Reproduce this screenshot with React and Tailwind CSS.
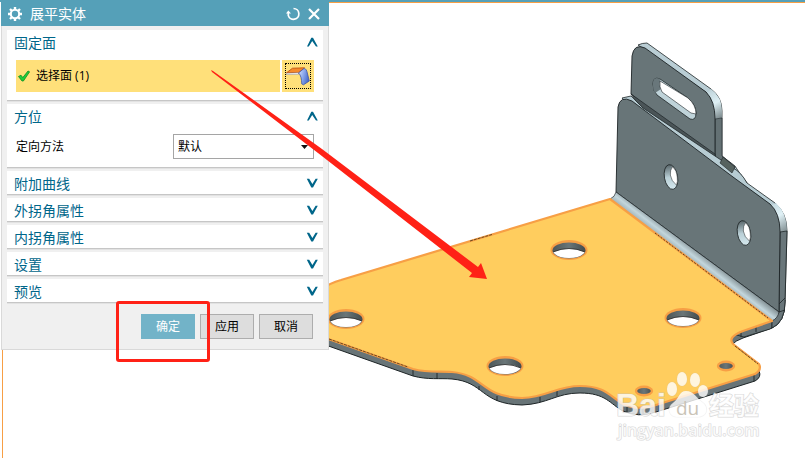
import React from 'react';

const Chevron = ({ open }) => (
    <svg className="w-3 h-3 shrink-0" viewBox="0 0 12 12" fill="#00668a" aria-hidden="true">
        {open ? (
            <path d="M1 9.500 L5.300 0.800 H7 L11.800 9.500 H10 L6.200 4 L2.800 9.500 Z" />
        ) : (
            <path d="M0.800 0.800 L5.300 9.500 H7 L11.800 0.800 H9.600 L6.400 6 L3.200 0.800 Z" />
        )}
    </svg>
);

const Section = ({ title, open = false, children }) => (
    <section className="bg-white border-b border-[#c6c6c6] shadow-[0_1px_0_#e2e2e2]">
        <h2>
            <button
                type="button"
                aria-expanded={open}
                className="flex w-full h-[23px] items-center justify-between pl-[7px] pr-[5px] pt-[2px] text-sm leading-5 text-[#00668a]"
            >
                <span>{title}</span>
                <Chevron open={open} />
            </button>
        </h2>
        {children}
    </section>
);

const GearIcon = () => (
    <svg className="w-[14px] h-[14px]" viewBox="0 0 14 14" aria-hidden="true">
        <g stroke="#fff" strokeWidth="2.4">
            <path d="M7 0 V2.500 M7 11.500 V14 M0 7 H2.500 M11.500 7 H14" />
            <path d="M2 2 L4 4 M10 10 L12 12 M12 2 L10 4 M4 10 L2 12" />
        </g>
        <circle cx="7" cy="7" r="4.2" fill="none" stroke="#fff" strokeWidth="2.1" />
    </svg>
);

const ResetIcon = () => (
    <svg className="w-[14px] h-[14px]" viewBox="0 0 14 14" fill="none" aria-hidden="true">
        <path d="M7.500 1.500 A5.400 5.400 0 1 1 2.300 8.500 V5" stroke="#fff" strokeWidth="1.7" />
        <path d="M0 6.600 L2.300 3.600 L5 6.600 Z" fill="#fff" />
    </svg>
);

const CloseIcon = () => (
    <svg className="w-3 h-3" viewBox="0 0 12 12" aria-hidden="true">
        <path d="M1 1 L11 11 M11 1 L1 11" stroke="#fff" strokeWidth="2.2" />
    </svg>
);

const CheckIcon = () => (
    <svg className="w-3 h-3" viewBox="0 0 12 12" aria-hidden="true">
        <path d="M0.5 6.5 L3 5.2 L4.8 7.6 L10 1 L11.6 1.8 L5.4 11 L4 11 Z" fill="#1fce3a" stroke="#0d8f22" strokeWidth="0.8" strokeLinejoin="round" />
    </svg>
);

const FaceIcon = () => (
    <svg className="w-6 h-6 shrink-0" viewBox="0 0 24 24" aria-hidden="true">
        <defs>
            <linearGradient id="bend" x1="0" x2="1" y1="0" y2="0.4">
                <stop offset="0" stopColor="#d8e4ff" />
                <stop offset="0.5" stopColor="#8fabee" />
                <stop offset="1" stopColor="#4a6ccc" />
            </linearGradient>
        </defs>
        <path d="M0.500 8.800 L6.500 4.200 L18.500 3.800 L13 8.400 Z" fill="#f58a2c" stroke="#b8480c" strokeWidth="0.8" />
        <path d="M0.500 9.300 L12.500 8.800 V10.400 L0.500 10.600 Z" fill="#fff" stroke="#8c8c9c" strokeWidth="0.5" />
        <path d="M12.500 9 L18 4.500 C20 4.600 20.800 6.500 21.300 9 L23.300 17 L17.500 20.800 L15.800 20 C15.500 15 15 11 12.500 9 Z" fill="url(#bend)" stroke="#3f55a8" strokeWidth="0.8" />
    </svg>
);

const PLATE = 'M320 290 Q330 283 341 280 L610 199 L772 321 L743 331 Q727 337 733 344 L759 364 Q762 370 755 374 L656 405 Q638 411 623 404 C610 397 606 386 580 386 C556 386 548 397 522 398 C480 397 485 375 452 372 C440 371 428 373 413 369 L320 336 Z';

// hole through the yellow plate, far wall visible under the upper rim
const PlateHole = ({ x, y }) => (
    <g>
        <ellipse cx={x} cy={y} rx="18.5" ry="10" fill="#f79f45" />
        <ellipse cx={x} cy={y + 0.5} rx="16.5" ry="8" fill="url(#wall)" />
        <path d={`M${x - 16} ${y + 2} Q${x} ${y - 5} ${x + 16} ${y + 2} Q${x + 12} ${y + 8} ${x} ${y + 8} Q${x - 12} ${y + 8} ${x - 16} ${y + 2} Z`} fill="#fff" />
        <path d={`M${x - 16} ${y + 2} Q${x} ${y - 5} ${x + 16} ${y + 2}`} fill="none" stroke="#222" strokeWidth="0.8" />
    </g>
);

const FlangeHole = ({ x, y }) => (
    <g transform={`translate(${x} ${y}) rotate(-10)`}>
        <ellipse rx="6.6" ry="12.5" fill="url(#rim)" stroke="#1d2426" strokeWidth="0.8" />
        <path d="M3.5 -10 Q7 -5 6.2 1 Q6 6 4 9 Q-0.5 4 -0.3 -2 Q0 -7 3.5 -10 Z" fill="#fff" stroke="#1d2426" strokeWidth="0.5" />
    </g>
);

const PartModel = () => (
    <svg className="absolute inset-0 w-full h-full" viewBox="0 0 805 458" preserveAspectRatio="xMinYMin meet" role="img">
        <defs>
            <linearGradient id="wall" x1="0" x2="1" y1="0" y2="0">
                <stop offset="0" stopColor="#4c5658" />
                <stop offset="0.5" stopColor="#6a7678" />
                <stop offset="1" stopColor="#434c4e" />
            </linearGradient>
            <linearGradient id="rim" x1="0" x2="0" y1="0" y2="1">
                <stop offset="0" stopColor="#59666a" />
                <stop offset="0.5" stopColor="#b9cfd6" />
                <stop offset="1" stopColor="#d5e8ee" />
            </linearGradient>
            <linearGradient id="fold" gradientUnits="userSpaceOnUse" x1="692" y1="262" x2="702" y2="249">
                <stop offset="0" stopColor="#9fb2b8" />
                <stop offset="0.35" stopColor="#c3d6dc" />
                <stop offset="1" stopColor="#667174" />
            </linearGradient>
            <linearGradient id="corner" gradientUnits="userSpaceOnUse" x1="765" y1="200" x2="787" y2="235">
                <stop offset="0" stopColor="#b4cbd2" />
                <stop offset="0.5" stopColor="#e0f1f6" />
                <stop offset="1" stopColor="#6d7a7d" />
            </linearGradient>
            <linearGradient id="tabcorner" gradientUnits="userSpaceOnUse" x1="705" y1="88" x2="722" y2="120">
                <stop offset="0" stopColor="#b7ccd3" />
                <stop offset="0.5" stopColor="#def0f5" />
                <stop offset="1" stopColor="#6d7a7d" />
            </linearGradient>
        </defs>

        {/* sheet thickness below the yellow face */}
        <path d={PLATE} transform="translate(0 7)" fill="#687477" stroke="#1d2426" strokeWidth="1" />
        <path d="M733 334 L772 319 L780 308 L785 300 Q786 323 770 329 L744 337 Z" fill="#687477" stroke="#1d2426" strokeWidth="0.8" />
        <path d="M413 370 V376 M437 373 V379 M479 386 V390 M497 396 V401 M540 397 V402 M557 391 V396 M627 407 V412 M643 409 V414 M659 405 V411 M754 375 V381 M741 332 V337 M756 327 V332" stroke="#1d2426" strokeWidth="0.9" />

        {/* upper tab */}
        <path d="M638 45 Q642 43 647 43 L711 89 Q722 97 722 111 V156 L735 166 Q738 171 747 183 L715 161 L707 93 Z" fill="#b9cdd4" stroke="#1d2426" strokeWidth="0.8" />
        <path d="M707 93 L711 89 Q722 97 722 111 V118 L715 119 Q716 101 707 93 Z" fill="url(#tabcorner)" />
        <path d="M715 119 L722 118 V156 L735 167 L731 174 L715 161 Z" fill="#647174" stroke="#1d2426" strokeWidth="0.6" />
        <path d="M631 94 L632 56 Q634 43 645 48 L706 92 Q715 101 715 119 V160 Z" fill="#687578" stroke="#1d2426" strokeWidth="0.9" />
        <path d="M631 94 L715 154 V162 L640 107 Z" fill="#4a5457" stroke="#1d2426" strokeWidth="0.7" />
        <path d="M653 84 Q653 76 660 79 L688 98 Q696 105 696 113 Q696 121 690 119 L657 95 Q653 91 653 84 Z" fill="#bfd3d9" stroke="#1d2426" strokeWidth="0.8" />
        <path d="M653 84 Q653 76 660 79 L661 89 L655 93 Q653 90 653 84 Z" fill="#69777b" />
        <path d="M660 81 L688 98 Q696 105 696 114 L691 113 L662 92 Q659 87 660 81 Z" fill="#fff" stroke="#1d2426" strokeWidth="0.6" />

        {/* rear flange */}
        <path d="M622 98 L631 96 L643 108 L733 168 Q741 172 747 183 L775 203 Q787 213 787 231 L785 302 Q785 322 772 328 L772 321 L779 312 L772 206 L628 105 Z" fill="#b7ccd3" stroke="#1d2426" strokeWidth="0.8" />
        <path d="M770 206 L776 203 Q787 213 787 231 L780 232 Q780 213 770 206 Z" fill="url(#corner)" />
        <path d="M780 232 L787 231 L785 302 Q785 322 772 328 V321 L779 312 Z" fill="#69767a" stroke="#1d2426" strokeWidth="0.8" />
        <path d="M779 304 L785 298 M779 312 L785 310" stroke="#1d2426" strokeWidth="0.8" />
        <path d="M723 157 L735 167 L732 173 L720 163 Z" fill="#56625f" stroke="#1d2426" strokeWidth="0.6" />
        <path d="M616 192 L618 107 Q620 95 632 101 L733 177 L770 204 Q780 213 780 232 L779 312 Z" fill="#687578" stroke="#1d2426" strokeWidth="0.9" />
        <path d="M616 192 L779 312 Q778 318 772 321 L610 199 Q615 197 616 192 Z" fill="url(#fold)" stroke="#1d2426" strokeWidth="0.7" />
        <FlangeHole x={671} y={177} />
        <FlangeHole x={744} y={233} />

        {/* selected face */}
        <path d={PLATE} fill="#ffcd5e" stroke="#f79f45" strokeWidth="2.2" strokeLinejoin="round" />
        <path d="M655 233 L768 318" stroke="#3a2a14" strokeWidth="0.8" strokeDasharray="2 1.5" />
        <path d="M329 339 L408 367 M470 241 L492 234.500 M735 346 L758 364" stroke="#4a3214" strokeWidth="0.8" strokeDasharray="3 1" fill="none" />
        <PlateHole x={346} y={319} />
        <PlateHole x={569} y={250} />
        <PlateHole x={505} y={366} />
        <PlateHole x={683} y={318} />
        <ellipse cx="726" cy="366" rx="8" ry="4.2" fill="url(#wall)" stroke="#f79f45" strokeWidth="2.4" />
        <ellipse cx="644" cy="391" rx="8" ry="4.2" fill="url(#wall)" stroke="#f79f45" strokeWidth="2.4" />

        {/* watermark */}
        <g fill="#fff" fillOpacity="0.8" stroke="#bdbdbd" strokeOpacity="0.6" strokeWidth="1.2" style={{ paintOrder: 'stroke' }}>
            <g strokeOpacity="0.2">
                <ellipse cx="672" cy="389" rx="5" ry="7" />
                <ellipse cx="682" cy="379" rx="5" ry="7" />
                <ellipse cx="695" cy="380" rx="5" ry="7" />
                <ellipse cx="703" cy="391" rx="5" ry="6" />
                <path d="M686 391 C679 391 679 399 673 403 C666 408 669 417 678 417 H697 C708 417 709 407 702 402 C696 398 694 391 686 391 Z" />
            </g>
            <text x="616" y="416" className="text-[32px] font-bold font-['Liberation_Sans',sans-serif]">Bai</text>
            <text x="709" y="415" className="text-[25px] font-bold font-['Noto_Sans_CJK_SC',sans-serif]">经验</text>
            <text x="618" y="436" className="text-[16px] font-semibold font-['Open_Sans',sans-serif]">jingyan.baidu.com</text>
        </g>
        <text x="676" y="415" fill="#c9c3b6" className="text-[19px] font-['Open_Sans',sans-serif]">du</text>
    </svg>
);

const Annotations = () => (
    <svg className="absolute top-0 left-0 w-[500px] h-[400px] pointer-events-none" viewBox="0 0 500 400" aria-hidden="true">
        <path d="M211 70 L213 71 L322 149 L478 267 L481 263 L487 279 L469 277 L472 273 L318 153 L212 72 Z" fill="#ff2116" />
        <rect x="117.500" y="302.500" width="91" height="58" rx="1.500" fill="none" stroke="#ff2116" strokeWidth="3" />
    </svg>
);

const UnbendDialog = () => (
    <form className="relative ml-px w-[328px] bg-[#f0f0f0]" onSubmit={(e) => e.preventDefault()}>
        <header className="flex h-[26px] items-center bg-[#55a0b8] pl-[7px] pr-[9px] pt-[2px] text-white">
            <GearIcon />
            <h1 className="ml-2 flex-1 text-sm leading-5">展平实体</h1>
            <button type="button" aria-label="重置"><ResetIcon /></button>
            <button type="button" aria-label="关闭" className="ml-2"><CloseIcon /></button>
        </header>

        <div className="border-x border-b border-[#d9d9d9] px-[5px] pt-1 pb-[10px]">
            <div className="flex flex-col gap-[3px]">
                <Section title="固定面" open>
                    <div className="flex gap-[2px] pl-[9px] pr-[9px] pt-[7px] pb-2">
                        <div className="flex flex-1 h-8 items-center gap-[6px] bg-[#ffe07a] pl-[2px] text-xs text-black">
                            <CheckIcon />
                            <span>选择面 (1)</span>
                        </div>
                        <button type="button" aria-label="面" className="w-8 h-8 bg-[#ffe07a] p-[3px]">
                            <span className="flex w-full h-full items-center justify-center border border-dotted border-black">
                                <FaceIcon />
                            </span>
                        </button>
                    </div>
                </Section>

                <Section title="方位" open>
                    <div className="flex items-center justify-between pl-[9px] pr-[9px] pt-[7px] pb-2 text-xs text-black">
                        <label htmlFor="orient">定向方法</label>
                        <div className="relative w-[141px]">
                            <select id="orient" className="block w-full h-[25px] appearance-none border border-[#a5a5a5] bg-white pl-1 text-xs text-black">
                                <option>默认</option>
                            </select>
                            <svg className="absolute right-[6px] top-[11px] w-[7px] h-1 pointer-events-none" viewBox="0 0 7 4" aria-hidden="true">
                                <path d="M0 0 H7 L3.5 4 Z" fill="#111" />
                            </svg>
                        </div>
                    </div>
                </Section>

                <Section title="附加曲线" />
                <Section title="外拐角属性" />
                <Section title="内拐角属性" />
                <Section title="设置" />
                <Section title="预览" />
            </div>

            <div className="mt-[11px] flex justify-end gap-[5px] pr-[10px] text-xs">
                <button type="submit" className="w-[54px] h-[25px] bg-[#72b3c8] text-white">确定</button>
                <button type="button" className="w-[54px] h-[25px] border border-[#adadad] bg-[#dddddd] text-black">应用</button>
                <button type="button" className="w-[54px] h-[25px] border border-[#adadad] bg-[#dddddd] text-black">取消</button>
            </div>
        </div>
    </form>
);

export default function App() {
    return (
        <main className="relative min-h-screen overflow-hidden bg-white font-['Open_Sans','Noto_Sans_CJK_SC',sans-serif]">
            <div className="absolute inset-0 border-t-2 border-[#55a0b8]">
                <div className="h-full ml-[2px] border-t border-l border-[#f79f45]" />
            </div>
            <PartModel />
            <UnbendDialog />
            <Annotations />
        </main>
    );
}
